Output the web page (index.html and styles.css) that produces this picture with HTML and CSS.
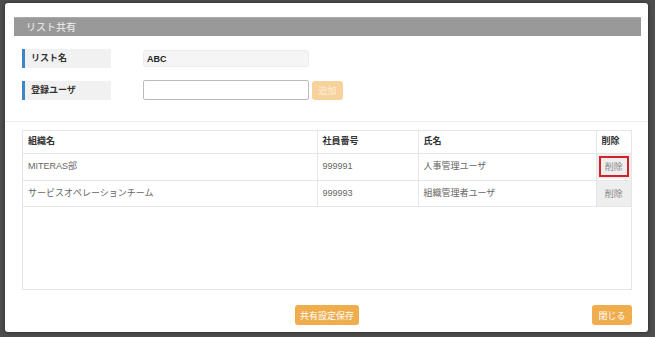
FILE: index.html
```html
<!DOCTYPE html>
<html lang="ja">
<head>
    <meta charset="UTF-8">
    <meta name="viewport" content="width=device-width, initial-scale=1.0">
    <title>リスト共有</title>
    <link rel="stylesheet" href="styles.css">
</head>
<body>

    <!-- Share list modal -->
    <div class="modal">
        <div class="modal-title">リスト共有</div>

        <div class="form">
            <div class="form-row">
                <div class="label">リスト名</div>
                <div class="readonly">ABC</div>
            </div>
            <div class="form-row">
                <div class="label">登録ユーザ</div>
                <input type="text" class="user-input">
                <button class="btn btn-add">追加</button>
            </div>
        </div>

        <div class="divider"></div>

        <div class="table-box">
            <table class="share-table">
                <thead>
                    <tr>
                        <th class="col-org">組織名</th>
                        <th class="col-no">社員番号</th>
                        <th class="col-name">氏名</th>
                        <th class="col-del">削除</th>
                    </tr>
                </thead>
                <tbody>
                    <tr>
                        <td>MITERAS部</td>
                        <td>999991</td>
                        <td>人事管理ユーザ</td>
                        <td class="cell-del"><button class="btn-del marked">削除</button></td>
                    </tr>
                    <tr>
                        <td>サービスオペレーションチーム</td>
                        <td>999993</td>
                        <td>組織管理者ユーザ</td>
                        <td class="cell-del"><button class="btn-del">削除</button></td>
                    </tr>
                </tbody>
            </table>
        </div>

        <div class="footer">
            <span></span>
            <button class="btn btn-save">共有設定保存</button>
            <button class="btn btn-close">閉じる</button>
        </div>
    </div>

</body>
</html>
```

FILE: styles.css
```css
* {
    box-sizing: border-box;
    margin: 0;
    padding: 0;
}

body, html {
    height: 100%;
    overflow: hidden;
}

body {
    background: #4e4e4e;
    padding: 3px 0 0 5px;
    font-family: 'Liberation Sans', 'Noto Sans CJK JP', sans-serif;
    font-size: 9px;
    color: #555;
}

.modal {
    width: 643px;
    height: 329px;
    background: #fff;
    border-radius: 3px;
    padding-top: 14px;
    box-shadow: 0 0 4px rgba(0, 0, 0, 0.5);
}

.modal-title {
    margin: 0 7px 0 9px;
    height: 19px;
    line-height: 19px;
    padding-left: 12px;
    background: #999;
    border-top: 1px solid #aaa;
    color: #f2f2f2;
    font-size: 10px;
}

/* Form */
.form {
    padding: 12px 0 0 17px;
    display: flex;
    flex-direction: column;
    gap: 12px;
}

.form-row {
    display: flex;
    align-items: center;
    height: 20px;
}

.label {
    width: 89px;
    height: 19px;
    line-height: 19px;
    padding-left: 6px;
    background: #f1f1f1;
    border-left: 3px solid #3d85c6;
    color: #333;
    font-weight: bold;
    margin-right: 32px;
}

.readonly {
    width: 166px;
    height: 17px;
    line-height: 17px;
    padding-left: 3px;
    background: #f5f5f5;
    border: 1px solid #ececec;
    border-radius: 3px;
    color: #222;
    font-weight: bold;
}

.user-input {
    width: 166px;
    height: 20px;
    border: 1px solid #bbb;
    border-radius: 2px;
    background: #fff;
}

.btn {
    border: none;
    border-radius: 3px;
    background: #f0ad4e;
    color: #fff;
    font-family: inherit;
    font-size: 9px;
    height: 20px;
    cursor: pointer;
}

.btn-add {
    width: 31px;
    height: 19px;
    margin-left: 3px;
    background: #f7d29c;
    color: #fbeeda;
}

.divider {
    margin-top: 21px;
    border-top: 1px solid #ececec;
}

/* Table */
.table-box {
    margin: 8px 16px 0 17px;
    height: 160px;
    border: 1px solid #e6e6e6;
}

.share-table {
    width: 100%;
    border-collapse: collapse;
    line-height: 1.2;
}

.share-table th,
.share-table td {
    text-align: left;
    padding: 0 0 0 5px;
    border-bottom: 1px solid #e6e6e6;
    border-right: 1px solid #e6e6e6;
}

.share-table th:last-child,
.share-table td:last-child {
    border-right: none;
}

.share-table th {
    height: 22px;
    color: #333;
    font-weight: bold;
}

.share-table td {
    height: 27px;
    color: #666;
}

.share-table tbody tr:last-child td {
    height: 26px;
}

.col-org { width: 294px; }
.col-no { width: 101px; }
.col-name { width: 178px; }

.share-table .cell-del {
    padding: 0;
}

.btn-del {
    display: block;
    width: 100%;
    height: 25px;
    border: none;
    background: #eee;
    color: #888;
    font-family: inherit;
    font-size: 9px;
}

.btn-del.marked {
    outline: 2px solid #d5202a;
    outline-offset: -4px;
}

/* Footer */
.footer {
    display: grid;
    grid-template-columns: 1fr auto 1fr;
    align-items: center;
    margin: 15px 16px 0 17px;
}

.btn-save {
    width: 64px;
}

.btn-close {
    width: 40px;
    justify-self: end;
}
```
